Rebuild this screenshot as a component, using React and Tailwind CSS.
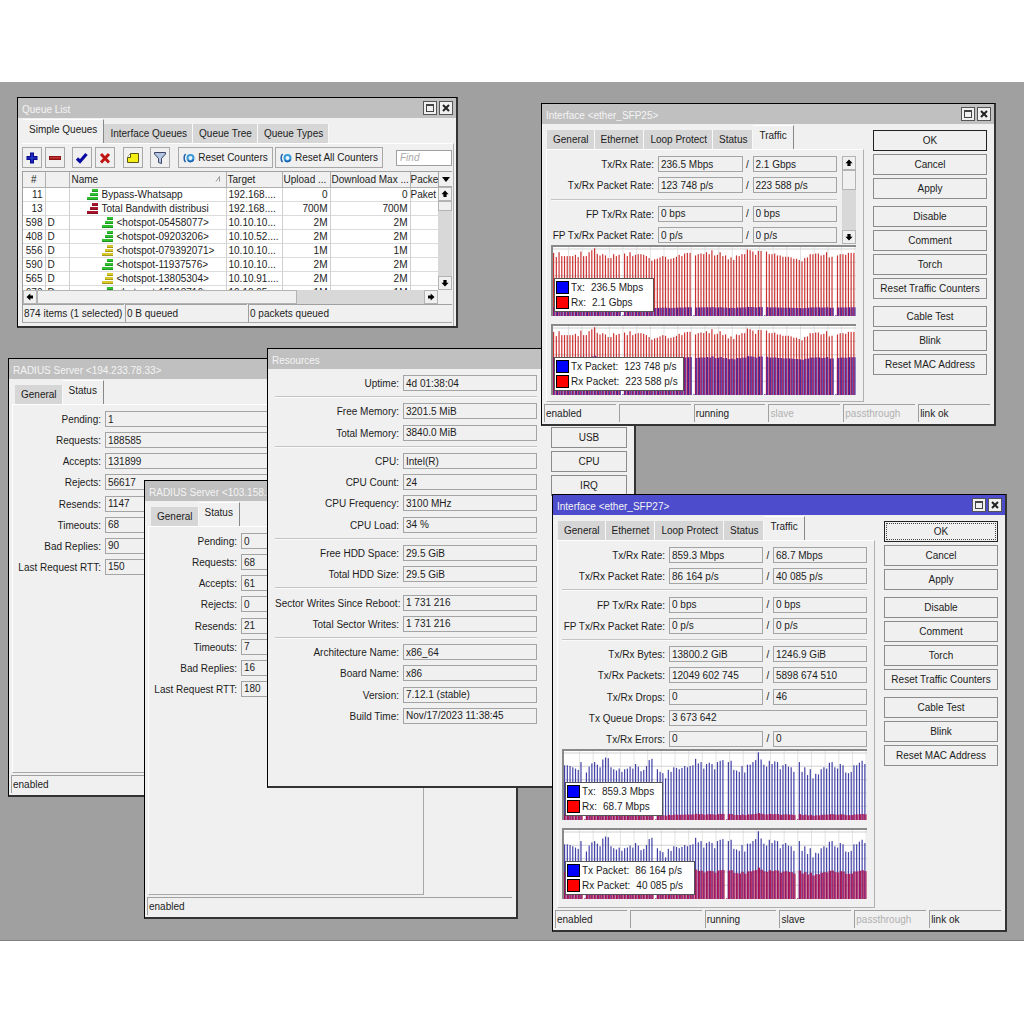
import React, { useId } from "react";

const QUEUES = [
  { id: 11, flag: "", name: "Bypass-Whatsapp", depth: 0, color: "#2fc22f", target: "192.168....", up: "0", down: "0", mark: "Paket" },
  { id: 13, flag: "", name: "Total Bandwith distribusi", depth: 0, color: "#a8142c", target: "192.168....", up: "700M", down: "700M", mark: "" },
  { id: 598, flag: "D", name: "<hotspot-05458077>", depth: 1, color: "#2fc22f", target: "10.10.10...", up: "2M", down: "2M", mark: "" },
  { id: 408, flag: "D", name: "<hotspot-09203206>", depth: 1, color: "#2fc22f", target: "10.10.52....", up: "2M", down: "2M", mark: "" },
  { id: 556, flag: "D", name: "<hotspot-079392071>", depth: 1, color: "#d8c828", target: "10.10.10...", up: "1M", down: "1M", mark: "" },
  { id: 590, flag: "D", name: "<hotspot-11937576>", depth: 1, color: "#2fc22f", target: "10.10.10...", up: "2M", down: "2M", mark: "" },
  { id: 565, flag: "D", name: "<hotspot-13805304>", depth: 1, color: "#d8c828", target: "10.10.91....", up: "2M", down: "2M", mark: "" },
  { id: 670, flag: "D", name: "<hotspot-15013716>", depth: 1, color: "#2fc22f", target: "10.10.95....", up: "1M", down: "1M", mark: "" },
];

const RESOURCES = [
  ["Uptime", "4d 01:38:04"],
  null,
  ["Free Memory", "3201.5 MiB"],
  ["Total Memory", "3840.0 MiB"],
  null,
  ["CPU", "Intel(R)"],
  ["CPU Count", "24"],
  ["CPU Frequency", "3100 MHz"],
  ["CPU Load", "34 %"],
  null,
  ["Free HDD Space", "29.5 GiB"],
  ["Total HDD Size", "29.5 GiB"],
  null,
  ["Sector Writes Since Reboot", "1 731 216"],
  ["Total Sector Writes", "1 731 216"],
  null,
  ["Architecture Name", "x86_64"],
  ["Board Name", "x86"],
  ["Version", "7.12.1 (stable)"],
  ["Build Time", "Nov/17/2023 11:38:45"],
];

const SFP25_ROWS = [
  ["Tx/Rx Rate", "236.5 Mbps", "2.1 Gbps"],
  ["Tx/Rx Packet Rate", "123 748 p/s", "223 588 p/s"],
  null,
  ["FP Tx/Rx Rate", "0 bps", "0 bps"],
  ["FP Tx/Rx Packet Rate", "0 p/s", "0 p/s"],
];

const SFP27_ROWS = [
  ["Tx/Rx Rate", "859.3 Mbps", "68.7 Mbps"],
  ["Tx/Rx Packet Rate", "86 164 p/s", "40 085 p/s"],
  null,
  ["FP Tx/Rx Rate", "0 bps", "0 bps"],
  ["FP Tx/Rx Packet Rate", "0 p/s", "0 p/s"],
  null,
  ["Tx/Rx Bytes", "13800.2 GiB", "1246.9 GiB"],
  ["Tx/Rx Packets", "12049 602 745", "5898 674 510"],
  ["Tx/Rx Drops", "0", "46"],
  ["Tx Queue Drops", "3 673 642"],
  ["Tx/Rx Errors", "0", "0"],
];

const INTERFACE_ACTIONS = [
  ["OK", "Cancel", "Apply"],
  ["Disable", "Comment", "Torch", "Reset Traffic Counters"],
  ["Cable Test", "Blink", "Reset MAC Address"],
];

// Sample tops measured from the ceiling of the graph, 0 is a missed sample
const SFP25_SAMPLES = [
  32, 45, 30, 42, 42, 42, 42, 42, 38, 45, 28, 42, 42, 30, 24, 18, 35, 40, 36, 40, 48, 48, 36, 42, 38, 0,
  34, 42, 30, 42, 38, 36, 36, 38, 42, 48, 56, 52, 50, 46, 42, 44, 52, 50, 48, 44, 38, 42, 34, 32, 32, 0,
  40, 36, 34, 36, 30, 36, 24, 40, 38, 30, 42, 40, 52, 46, 54, 40, 42, 36, 36, 22, 24, 28, 38, 26, 26, 0,
  28, 36, 36, 34, 40, 40, 44, 44, 44, 46, 50, 50, 54, 58, 48, 46, 36, 36, 34, 34, 40, 38, 30, 46, 44, 0,
  40, 36, 36, 38, 32, 32, 32,
].map((v) => (v ? v - 14 : 0));

const SFP27_SAMPLES = [
  70, 70, 72, 76, 80, 84, 60, 0,
  92, 74, 64, 60, 68, 76, 52, 46, 48, 76, 82, 86, 80, 90, 82, 80, 74, 80, 66, 74, 88, 84, 72, 54, 50, 0,
  82, 90, 94, 110, 84, 90, 76, 78, 82, 78, 72, 76, 72, 70, 50, 64, 60, 80, 66, 62, 66, 82, 60, 56, 54, 0,
  60, 56, 84, 86, 90, 72, 92, 68, 68, 60, 54, 30, 52, 68, 74, 56, 66, 58, 60, 82, 70, 66, 74, 76, 90, 0,
  60, 90, 76, 100, 82, 110, 96, 98, 82, 76, 80, 62, 60, 76, 80, 66, 70, 92, 94, 90, 70, 70, 62, 56, 66,
].map((v) => (v ? v - 26 : 0));

const MaximizeIcon = () => (
  <svg viewBox="0 0 12 12" className="w-3 h-3">
    <rect x="2.500" y="2.500" width="7" height="7" fill="none" stroke="#444" />
    <path d="M2 3h8" stroke="#444" strokeWidth="2" />
  </svg>
);

const CloseIcon = () => (
  <svg viewBox="0 0 12 12" className="w-3 h-3">
    <path d="M3 3l6 6M9 3l-6 6" stroke="#222" strokeWidth="2" />
  </svg>
);

// Stubby arrow used on every scroll bar
const ArrowIcon = ({ turn = 0 }) => (
  <svg viewBox="0 0 12 12" className="w-3 h-3">
    <path transform={`rotate(${turn} 6 6)`} d="M6 2.500l3.600 3.800H7.600V9H4.400V6.300H2.400z" fill="#000" />
  </svg>
);

const QueueIcon = ({ color }) => (
  <svg viewBox="0 0 12 11" className="w-3 h-[11px] shrink-0">
    <path d="M5 0h6v3H5zM3 4h8v3H3zM0 8h11v3H0z" fill={color} />
    <path d="M5 2.500h6M3 6.500h8M0 10.500h11" stroke="#000" strokeOpacity="0.25" />
  </svg>
);

const PlusIcon = () => (
  <svg viewBox="0 0 14 14" className="w-[14px] h-[14px]">
    <path d="M5 1.500h4V5h3.500v4H9v3.500H5V9H1.500V5H5z" fill="#0a0a8c" />
    <path d="M6.500 2.500h1v9h-1zM2.500 6.500h9v1h-9z" fill="#2a4ae0" />
  </svg>
);

const MinusIcon = () => (
  <svg viewBox="0 0 14 14" className="w-[14px] h-[14px]">
    <rect x="1" y="5" width="12" height="4" fill="#8c1414" />
    <rect x="2" y="6" width="10" height="1.500" fill="#c83232" />
  </svg>
);

const CheckIcon = () => (
  <svg viewBox="0 0 14 14" className="w-[14px] h-[14px]">
    <path d="M2 7.500l3 3L11.500 3" fill="none" stroke="#0a0aa0" strokeWidth="3.200" />
  </svg>
);

const CrossIcon = () => (
  <svg viewBox="0 0 14 14" className="w-[14px] h-[14px]">
    <path d="M3 3l8 8.500M11 3l-8 8.500" fill="none" stroke="#c01414" strokeWidth="3" />
  </svg>
);

const NoteIcon = () => (
  <svg viewBox="0 0 14 14" className="w-[14px] h-[14px]">
    <path d="M4.500 2.500h8v9H1.500v-5z" fill="#f5ee14" stroke="#5a5614" />
    <path d="M1.500 6.500h3v-4" fill="#fff" stroke="#5a5614" />
  </svg>
);

const FilterIcon = () => (
  <svg viewBox="0 0 14 14" className="w-[14px] h-[14px]">
    <path d="M1.500 1.500h11v1.500L8.500 7.500V12.500l-3-1V7.500L1.500 3z" fill="#b4c6e4" stroke="#3c4664" />
  </svg>
);

const ResetIcon = () => (
  <svg viewBox="0 0 12 10" className="w-3 h-[10px] shrink-0">
    <circle cx="7.500" cy="5" r="3" fill="#e8f4ff" stroke="#3a9ad8" strokeWidth="2" />
    <path d="M5 7.500a3.200 3.200 0 0 0 5.500-1" fill="none" stroke="#1e5fae" strokeWidth="1.500" />
    <path d="M2.600 1C.6 3 .6 7 2.600 9" fill="none" stroke="#1e5fae" strokeWidth="1.500" />
  </svg>
);

const Window = ({ title, active, className, children }) => (
  <section
    className={`absolute flex flex-col bg-[#f0f0f0] border-t border-l border-r-2 border-b-2 border-t-black border-l-black border-r-[#333] border-b-[#333] ${className}`}
  >
    <header
      className={`flex items-center h-5 shrink-0 pl-1 pr-[3px] ${
        active ? "bg-[#4c4ccc]" : "bg-[#c0c0c0]"
      }`}
    >
      <h2 className="flex-1 pt-[3px] text-[#f4f4f4] whitespace-nowrap">{title}</h2>
      <div className="flex gap-[2px]">
        <button aria-label="Maximize" className="w-[14px] h-[14px] bg-[#f0f0f0] border border-[#555]">
          <MaximizeIcon />
        </button>
        <button aria-label="Close" className="w-[14px] h-[14px] bg-[#f0f0f0] border border-[#555]">
          <CloseIcon />
        </button>
      </div>
    </header>
    {children}
  </section>
);

const Tabs = ({ tabs, selected }) => (
  <div role="tablist" className="flex items-end h-[25px] shrink-0 pl-px">
    {tabs.map((tab) =>
      tab === selected ? (
        <button
          key={tab}
          role="tab"
          aria-selected="true"
          className="h-6 px-[6px] pb-1 bg-[#f0f0f0] border-t border-t-white border-r border-r-[#888] whitespace-nowrap"
        >
          {tab}
        </button>
      ) : (
        <button
          key={tab}
          role="tab"
          aria-selected="false"
          className="h-[19px] pl-[6px] pr-[5px] bg-[#d6d6d6] border-r border-r-[#f8f8f8] whitespace-nowrap"
        >
          {tab}
        </button>
      )
    )}
  </div>
);

const StatusBar = ({ children }) => (
  <footer className="flex gap-[3px] h-[18px] shrink-0 mt-[2px] mb-[2px] ml-[2px] mr-1">{children}</footer>
);

const StatusCell = ({ className = "flex-1", muted, children }) => (
  <div
    className={`min-w-0 pl-px leading-[18px] whitespace-nowrap border-t border-l border-[#a0a0a0] ${className} ${
      muted ? "text-[#b0b0b0]" : ""
    }`}
  >
    {children}
  </div>
);

const Field = ({ id, value, label }) => (
  <input
    id={id}
    aria-label={label}
    readOnly
    defaultValue={value}
    className="flex-1 min-w-0 h-4 px-[2px] bg-[#f0f0f0] border border-[#a4a4a4] outline-none"
  />
);

const FieldRow = ({ row, labelClass }) => {
  const id = useId();
  const [label, first, second] = row;

  return (
    <div className="flex items-center">
      <label htmlFor={id} className={`shrink-0 pt-px mr-1 text-right whitespace-nowrap ${labelClass}`}>
        {label}:
      </label>
      <Field id={id} value={first} />
      {second !== undefined && (
        <>
          <span className="w-[10px] text-center">/</span>
          <Field value={second} label={`${label} Rx`} />
        </>
      )}
    </div>
  );
};

const FieldList = ({ rows, labelClass, className }) => (
  <div className={`flex flex-col justify-between min-w-0 ${className}`}>
    {rows.map((row, index) =>
      row ? (
        <FieldRow key={index} row={row} labelClass={labelClass} />
      ) : (
        <hr key={index} className="h-[2px] border-0 border-t border-t-[#c4c4c4] bg-[#fafafa]" />
      )
    )}
  </div>
);

const PushButton = ({ children, className = "border-[#8c8c8c]" }) => (
  <button className={`w-full h-[21px] bg-[#f0f0f0] border whitespace-nowrap ${className}`}>{children}</button>
);

// Tall series is drawn first, short one fills the column beside it
const Graph = ({ samples, tall, short, level, spread, legend, legendClass }) => (
  <div className="relative h-[71px] bg-white border-t-2 border-l-2 border-[#8a8a8a]">
    <svg viewBox="0 0 333 212" preserveAspectRatio="none" className="block w-full h-full">
      {Array.from({ length: 22 }, (_, i) => (
        <path key={i} d={`M${i * 15 + 17} 0V212`} stroke="#d2d2d2" />
      ))}
      {Array.from({ length: 5 }, (_, i) => (
        <path key={i} d={`M0 ${i * 41 + 6}H333`} stroke="#d2d2d2" strokeWidth="3" />
      ))}
      {samples.map((top, i) => {
        const height = top ? level + (45 - top) * spread : 3;
        return (
          <g key={i}>
            {top > 0 && <rect x={i * 3} y={top} width="1.300" height={212 - top} fill={tall} />}
            {top > 0 && <rect x={i * 3} y={212 - height} width="1.300" height={height} fill="#961464" />}
            <rect x={i * 3 + 1.3} y={212 - height} width="1.200" height={height} fill={short} />
          </g>
        );
      })}
    </svg>
    <div
      className={`absolute left-px bottom-1 flex flex-col gap-[2px] h-[34px] py-[2px] pl-px bg-white border border-[#555] ${legendClass}`}
    >
      {legend.map(([name, value], index) => (
        <div key={name} className="flex items-center h-[14px] whitespace-nowrap">
          <span
            className={`w-[13px] h-[13px] mr-[2px] border border-black ${
              index === 0 ? "bg-[#0000ff]" : "bg-[#ff0000]"
            }`}
          />
          <span className="mr-[6px]">{name}:</span>
          <span>{value}</span>
        </div>
      ))}
    </div>
  </div>
);

const ScrollButton = ({ turn, label, className = "" }) => (
  <button
    aria-label={label}
    className={`flex items-center justify-center shrink-0 w-[14px] h-[14px] bg-[#f0f0f0] border border-[#b4b4b4] ${className}`}
  >
    <ArrowIcon turn={turn} />
  </button>
);

const InterfaceWindow = ({ name, active, className, status, children }) => (
  <Window title={`Interface <${name}>`} active={active} className={className}>
    <div className="flex flex-1 min-h-0">
      <div className="flex flex-col flex-1 min-w-0 pl-1">
        <Tabs tabs={["General", "Ethernet", "Loop Protect", "Status", "Traffic"]} selected="Traffic" />
        <div className="flex flex-col flex-1 min-h-0 pl-1 pr-[7px] pt-[6px] border-t border-t-white border-l border-l-white border-r border-r-[#b0b0b0] border-b border-b-[#b0b0b0]">
          {children}
        </div>
      </div>
      <div className="flex flex-col gap-[7px] w-[114px] shrink-0 mt-[6px] ml-[9px] mr-[7px]">
        {INTERFACE_ACTIONS.map((group) => (
          <div key={group[0]} className="flex flex-col gap-[3px]">
            {group.map((action) => (
              <PushButton
                key={action}
                className={
                  action !== "OK"
                    ? "border-[#8c8c8c]"
                    : active
                      ? "border-[#222] outline-1 outline-dotted outline-[#444] -outline-offset-3"
                      : "border-[#222]"
                }
              >
                {action}
              </PushButton>
            ))}
          </div>
        ))}
      </div>
    </div>
    <StatusBar>
      {status.map(([text, muted], index) => (
        <StatusCell key={index} muted={muted}>
          {text}
        </StatusCell>
      ))}
    </StatusBar>
  </Window>
);

const RadiusWindow = ({ address, values, className }) => {
  const labels = ["Pending", "Requests", "Accepts", "Rejects", "Resends", "Timeouts", "Bad Replies", "Last Request RTT"];

  return (
    <Window title={`RADIUS Server <${address}>`} className={className}>
      <div className="flex flex-col flex-1 min-h-0 ml-[3px] mr-[92px]">
        <div className="pl-[2px]">
          <Tabs tabs={["General", "Status"]} selected="Status" />
        </div>
        <div className="flex-1 pl-1 pr-2 pt-[6px] border-t border-l border-t-white border-l-white border-r border-b border-r-[#a8a8a8] border-b-[#a8a8a8]">
          <FieldList rows={labels.map((l, i) => [l, values[i]])} labelClass="w-[84px]" className="h-[164px]" />
        </div>
      </div>
      <StatusBar>
        <StatusCell>enabled</StatusCell>
      </StatusBar>
    </Window>
  );
};

const ToolButton = ({ label, className = "", children }) => (
  <button
    aria-label={label}
    className={`flex items-center justify-center w-5 h-[21px] border border-[#a8a8a8] ${className}`}
  >
    {children}
  </button>
);

const QueueWindow = () => (
  <Window title="Queue List" className="left-[17px] top-[15px] w-[441px] h-[231px]">
    <div className="flex flex-col flex-1 min-h-0 pl-1 pr-[2px]">
      <Tabs tabs={["Simple Queues", "Interface Queues", "Queue Tree", "Queue Types"]} selected="Simple Queues" />
      <div className="flex flex-col flex-1 min-h-0 pt-[3px] pr-px border-t border-t-white border-r border-r-[#b0b0b0]">
        <div className="flex items-center h-[21px] shrink-0">
          <ToolButton label="Add">
            <PlusIcon />
          </ToolButton>
          <ToolButton label="Remove" className="ml-[3px]">
            <MinusIcon />
          </ToolButton>
          <ToolButton label="Enable" className="ml-[7px]">
            <CheckIcon />
          </ToolButton>
          <ToolButton label="Disable" className="ml-[3px]">
            <CrossIcon />
          </ToolButton>
          <ToolButton label="Comment" className="ml-2">
            <NoteIcon />
          </ToolButton>
          <ToolButton label="Filter" className="ml-[7px]">
            <FilterIcon />
          </ToolButton>
          <button className="flex items-center justify-center gap-[3px] w-[95px] h-[21px] ml-2 border border-[#a8a8a8] whitespace-nowrap">
            <ResetIcon />
            Reset Counters
          </button>
          <button className="flex items-center justify-center gap-[3px] w-[108px] h-[21px] ml-[2px] border border-[#a8a8a8] whitespace-nowrap">
            <ResetIcon />
            Reset All Counters
          </button>
          <input
            aria-label="Find"
            placeholder="Find"
            className="w-14 h-4 ml-auto px-[3px] bg-white border border-[#a0a0a0] italic placeholder:text-[#a8a8a8]"
          />
        </div>

        <div className="flex h-[119px] shrink-0 mt-[3px] border-t border-l border-[#a0a0a0] overflow-hidden">
          <div className="flex-1 min-w-0 overflow-hidden bg-white">
            <table className="w-full table-fixed border-collapse">
              <colgroup>
                <col className="w-[22px]" />
                <col className="w-[24px]" />
                <col className="w-[157px]" />
                <col className="w-[56px]" />
                <col className="w-[48px]" />
                <col className="w-[80px]" />
                <col />
              </colgroup>
              <thead>
                <tr className="h-[15px] bg-[#f0f0f0] text-left whitespace-nowrap">
                  <th className="p-0 font-normal text-center border-r border-b border-[#b0b0b0]">#</th>
                  <th className="p-0 font-normal border-r border-b border-[#b0b0b0]" aria-label="Flags" />
                  <th className="p-0 pl-[2px] font-normal border-r border-b border-[#b0b0b0]">
                    <div className="flex items-center justify-between pr-[5px]">
                      Name
                      <svg viewBox="0 0 6 6" className="w-[6px] h-[6px]">
                        <path d="M1 5.500L4.500.5v5" fill="none" stroke="#999" />
                      </svg>
                    </div>
                  </th>
                  <th className="p-0 pl-px font-normal border-r border-b border-[#b0b0b0]">Target</th>
                  <th className="p-0 pl-px font-normal border-r border-b border-[#b0b0b0]">Upload ...</th>
                  <th className="p-0 pl-px font-normal border-r border-b border-[#b0b0b0]">Download Max ...</th>
                  <th className="p-0 font-normal border-b border-[#b0b0b0]">Packe</th>
                </tr>
              </thead>
              <tbody>
                {QUEUES.map((q) => (
                  <tr key={q.id} className="h-[14px] whitespace-nowrap border-b border-[#dcdcdc]">
                    <td className="p-0 pr-[2px] text-right border-r border-[#d0d0d0]">{q.id}</td>
                    <td className="p-0 pl-[2px] border-r border-[#d0d0d0]">{q.flag}</td>
                    <td className="p-0 border-r border-[#d0d0d0]">
                      <div className={`flex items-center gap-[3px] ${q.depth ? "pl-8" : "pl-[17px]"}`}>
                        <QueueIcon color={q.color} />
                        {q.name}
                      </div>
                    </td>
                    <td className="p-0 pl-[2px] border-r border-[#d0d0d0]">{q.target}</td>
                    <td className="p-0 pr-[2px] text-right border-r border-[#d0d0d0]">{q.up}</td>
                    <td className="p-0 pr-[2px] text-right border-r border-[#d0d0d0]">{q.down}</td>
                    <td className="p-0">{q.mark}</td>
                  </tr>
                ))}
              </tbody>
            </table>
          </div>
          <div className="flex flex-col w-[14px] bg-[#d8d8d8]">
            <button
              aria-label="Columns"
              className="flex items-center justify-center h-[15px] bg-[#f0f0f0] border-l border-b border-[#a8a8a8]"
            >
              <svg viewBox="0 0 8 5" className="w-2 h-[5px]">
                <path d="M0 0h8L4 5z" fill="#000" />
              </svg>
            </button>
            <ScrollButton label="Scroll up" />
            <div className="h-[10px] bg-[#f0f0f0] border border-[#b4b4b4]" />
            <ScrollButton label="Scroll down" turn={180} className="mt-auto" />
          </div>
        </div>
        <div className="flex h-[14px] shrink-0 border-l border-[#a0a0a0] bg-[#d8d8d8]">
          <ScrollButton label="Scroll left" turn={-90} />
          <div className="w-[260px] bg-[#f0f0f0] border border-[#b4b4b4]" />
          <ScrollButton label="Scroll right" turn={90} className="ml-auto" />
          <div className="w-[14px] bg-[#f0f0f0]" />
        </div>
        <div className="flex gap-px h-[19px] shrink-0 border-b border-[#a8a8a8]">
          <StatusCell className="w-[102px]">874 items (1 selected)</StatusCell>
          <StatusCell className="w-[122px]">0 B queued</StatusCell>
          <StatusCell>0 packets queued</StatusCell>
        </div>
      </div>
    </div>
  </Window>
);

const ResourcesWindow = () => (
  <Window title="Resources" className="left-[267px] top-[266px] w-[369px] h-[440px]">
    <div className="flex flex-1 min-h-0 pt-[6px] pl-[7px] pr-[7px]">
      <FieldList rows={RESOURCES} labelClass="w-[124px]" className="flex-1 h-[349px]" />
      <div className="flex flex-col gap-[3px] w-[76px] shrink-0 ml-[14px] mt-[52px]">
        {["USB", "CPU", "IRQ"].map((name) => (
          <PushButton key={name}>{name}</PushButton>
        ))}
      </div>
    </div>
  </Window>
);

const App = () => {
  return (
    <div className="min-h-screen py-[82px] bg-white">
      <main className="relative h-[859px] overflow-hidden bg-[#a0a0a0] border-b border-[#808080] text-[10px] leading-[13px] text-[#1c1c1c] font-['Liberation_Sans',Arial,sans-serif]">
        <QueueWindow />

        <RadiusWindow
          address="194.233.78.33"
          values={["1", "188585", "131899", "56617", "1147", "68", "90", "150"]}
          className="left-[8px] top-[276px] w-[374px] h-[439px]"
        />
        <RadiusWindow
          address="103.158.24.10"
          values={["0", "68", "61", "0", "21", "7", "16", "180"]}
          className="left-[144px] top-[398px] w-[374px] h-[439px]"
        />

        <ResourcesWindow />

        <InterfaceWindow
          name="ether_SFP25"
          className="left-[541px] top-[21px] w-[455px] h-[323px]"
          status={[["enabled"], [""], ["running"], ["slave", true], ["passthrough", true], ["link ok"]]}
        >
          <div className="flex gap-[5px] h-[88px] shrink-0 mb-px overflow-hidden">
            <FieldList rows={SFP25_ROWS} labelClass="w-[103px]" className="flex-1 h-[87px]" />
            <div className="flex flex-col w-[14px] shrink-0 bg-[#d8d8d8]">
              <ScrollButton label="Scroll up" />
              <div className="h-5 bg-[#f0f0f0] border border-[#b4b4b4]" />
              <ScrollButton label="Scroll down" turn={180} className="mt-auto" />
            </div>
          </div>
          <div className="flex flex-col gap-2">
            <Graph
              samples={SFP25_SAMPLES}
              tall="#cc3232"
              short="#3c28a0"
              level={24}
              spread={0.1}
              legend={[["Tx", "236.5 Mbps"], ["Rx", "2.1 Gbps"]]}
              legendClass="w-[100px]"
            />
            <Graph
              samples={SFP25_SAMPLES}
              tall="#cc3232"
              short="#3c28a0"
              level={108}
              spread={0.3}
              legend={[["Tx Packet", "123 748 p/s"], ["Rx Packet", "223 588 p/s"]]}
              legendClass="w-[130px]"
            />
          </div>
        </InterfaceWindow>

        <InterfaceWindow
          name="ether_SFP27"
          active
          className="left-[552px] top-[412px] w-[455px] h-[438px]"
          status={[["enabled"], [""], ["running"], ["slave"], ["passthrough", true], ["link ok"]]}
        >
          <FieldList rows={SFP27_ROWS} labelClass="w-[103px]" className="h-[200px] shrink-0 mb-[2px]" />
          <div className="flex flex-col gap-2">
            <Graph
              samples={SFP27_SAMPLES}
              tall="#4040a8"
              short="#b41e50"
              level={17}
              spread={0.1}
              legend={[["Tx", "859.3 Mbps"], ["Rx", "68.7 Mbps"]]}
              legendClass="w-[98px]"
            />
            <Graph
              samples={SFP27_SAMPLES}
              tall="#4040a8"
              short="#b41e50"
              level={84}
              spread={0.3}
              legend={[["Tx Packet", "86 164 p/s"], ["Rx Packet", "40 085 p/s"]]}
              legendClass="w-[130px]"
            />
          </div>
        </InterfaceWindow>
      </main>
    </div>
  );
};

export default App;
